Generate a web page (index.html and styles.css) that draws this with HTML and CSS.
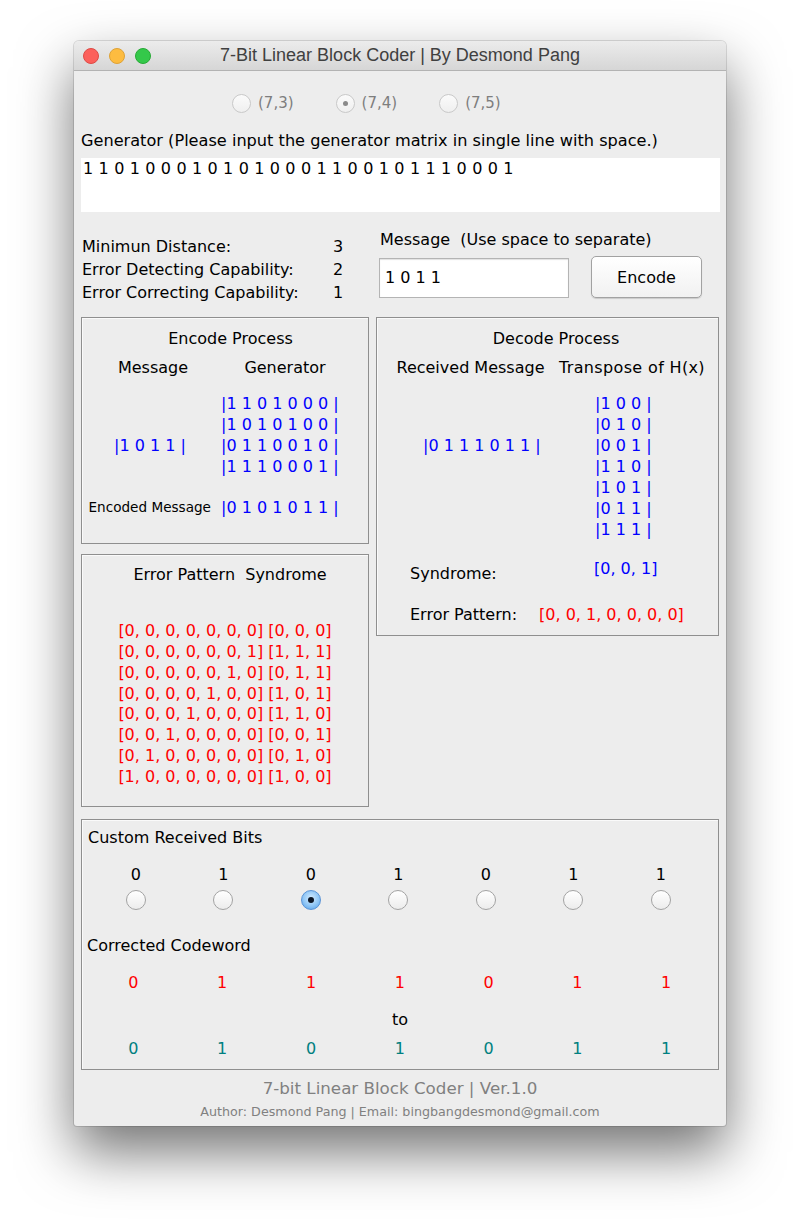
FILE: index.html
```html
<!DOCTYPE html>
<html>
<head>
<meta charset="utf-8">
<link rel="stylesheet" href="styles.css">
</head>
<body>
<div class="stage">
  <div class="window">
    <div class="titlebar">
      <div class="lights">
        <span class="light red"></span>
        <span class="light yellow"></span>
        <span class="light green"></span>
      </div>
      <div class="title">7-Bit Linear Block Coder | By Desmond Pang</div>
      <div></div>
    </div>
    <div class="content">
      <div class="models">
        <label class="model"><span class="radio dis"></span>(7,3)</label>
        <label class="model"><span class="radio dis on"></span>(7,4)</label>
        <label class="model"><span class="radio dis"></span>(7,5)</label>
      </div>
      <div class="gen-label">Generator (Please input the generator matrix in single line with space.)</div>
      <div class="gen-input">1 1 0 1 0 0 0 1 0 1 0 1 0 0 0 1 1 0 0 1 0 1 1 1 0 0 0 1</div>

      <div class="row-info">
        <div class="stats">
          <span>Minimun Distance:</span><span>3</span>
          <span>Error Detecting Capability:</span><span>2</span>
          <span>Error Correcting Capability:</span><span>1</span>
        </div>
        <div class="msg">
          <div class="msg-label">Message&nbsp; (Use space to separate)</div>
          <div class="msg-controls">
            <div class="msg-input">1 0 1 1</div>
            <div class="btn">Encode</div>
          </div>
        </div>
      </div>

      <div class="panels">
        <div class="left-col">
          <div class="panel encode">
            <div class="ptitle span2">Encode Process</div>
            <div class="hdr c1">Message</div>
            <div class="hdr c2">Generator</div>
            <div class="mx c2 first">|1 1 0 1 0 0 0 |</div>
            <div class="mx c2">|1 0 1 0 1 0 0 |</div>
            <div class="mx c1 blue">|1 0 1 1 |</div>
            <div class="mx c2">|0 1 1 0 0 1 0 |</div>
            <div class="mx c2">|1 1 1 0 0 0 1 |</div>
            <div class="enc-label c1">Encoded Message</div>
            <div class="mx c2 enc">|0 1 0 1 0 1 1 |</div>
          </div>
          <div class="panel errors">
            <div class="ptitle">Error Pattern&nbsp; Syndrome</div>
            <div class="elist">
              <div>[0, 0, 0, 0, 0, 0, 0] [0, 0, 0]</div>
              <div>[0, 0, 0, 0, 0, 0, 1] [1, 1, 1]</div>
              <div>[0, 0, 0, 0, 0, 1, 0] [0, 1, 1]</div>
              <div>[0, 0, 0, 0, 1, 0, 0] [1, 0, 1]</div>
              <div>[0, 0, 0, 1, 0, 0, 0] [1, 1, 0]</div>
              <div>[0, 0, 1, 0, 0, 0, 0] [0, 0, 1]</div>
              <div>[0, 1, 0, 0, 0, 0, 0] [0, 1, 0]</div>
              <div>[1, 0, 0, 0, 0, 0, 0] [1, 0, 0]</div>
            </div>
          </div>
        </div>
        <div class="panel decode">
          <div class="ptitle span2">Decode Process</div>
          <div class="hdr c1">Received Message</div>
          <div class="hdr c2">Transpose of H(x)</div>
          <div class="mx c2 hm first">|1 0 0 |</div>
          <div class="mx c2 hm">|0 1 0 |</div>
          <div class="mx c1 blue rmsg">|0 1 1 1 0 1 1 |</div>
          <div class="mx c2 hm">|0 0 1 |</div>
          <div class="mx c2 hm">|1 1 0 |</div>
          <div class="mx c2 hm">|1 0 1 |</div>
          <div class="mx c2 hm">|0 1 1 |</div>
          <div class="mx c2 hm">|1 1 1 |</div>
          <div class="syn-label c1">Syndrome:</div>
          <div class="syn-val c2">[0, 0, 1]</div>
          <div class="ep span2"><span class="ep-label">Error Pattern:</span><span class="ep-val">[0, 0, 1, 0, 0, 0, 0]</span></div>
        </div>
      </div>

      <div class="panel custom">
        <div class="ctitle">Custom Received Bits</div>
        <div class="bits">
          <span>0</span><span>1</span><span>0</span><span>1</span><span>0</span><span>1</span><span>1</span>
        </div>
        <div class="bits radios">
          <span class="radio"></span><span class="radio"></span><span class="radio sel"></span><span class="radio"></span><span class="radio"></span><span class="radio"></span><span class="radio"></span>
        </div>
        <div class="ctitle2">Corrected Codeword</div>
        <div class="digits red">
          <span>0</span><span>1</span><span>1</span><span>1</span><span>0</span><span>1</span><span>1</span>
        </div>
        <div class="to">to</div>
        <div class="digits teal">
          <span>0</span><span>1</span><span>0</span><span>1</span><span>0</span><span>1</span><span>1</span>
        </div>
      </div>

      <div class="foot1">7-bit Linear Block Coder | Ver.1.0</div>
      <div class="foot2">Author: Desmond Pang | Email: bingbangdesmond@gmail.com</div>
    </div>
  </div>
</div>
</body>
</html>
```

FILE: styles.css
```css
* { box-sizing: border-box; }
html, body { margin: 0; padding: 0; background: #ffffff; }
body {
  font-family: "DejaVu Sans", sans-serif;
  color: #000;
  width: 800px;
  height: 1231px;
  overflow: hidden;
}
.stage { padding: 41px 0 0 74px; }
.window {
  width: 652px;
  background: #ededed;
  border-radius: 5px 5px 3px 3px;
  box-shadow: 0 26px 55px rgba(0,0,0,0.55), 0 0 0 1px rgba(0,0,0,0.12);
  overflow: hidden;
}
.titlebar {
  height: 30px;
  display: grid;
  grid-template-columns: 1fr auto 1fr;
  align-items: center;
  background: linear-gradient(#ececec, #d6d6d6);
  border-bottom: 1px solid #b3b3b3;
}
.lights { display: flex; gap: 10px; padding-left: 9px; }
.light { width: 16px; height: 16px; border-radius: 50%; display: block; }
.light.red { background: #fc605b; border: 1px solid #de4a45; }
.light.yellow { background: #fdbc40; border: 1px solid #dea236; }
.light.green { background: #34c84a; border: 1px solid #27aa35; }
.title {
  font-family: "Liberation Sans", sans-serif;
  font-size: 18px;
  color: #404040;
}
.content { padding: 0 7px; }

.radio {
  display: inline-block;
  width: 20px; height: 20px;
  border-radius: 50%;
  border: 1px solid #a3a3a3;
  background: linear-gradient(#ffffff, #ececec);
  position: relative;
  flex: none;
}
.radio.dis { border-color: #c9c9c9; background: linear-gradient(#fbfbfb, #efefef); width: 19px; height: 19px; }
.radio.dis.on::after {
  content: ""; position: absolute; left: 6px; top: 6px; width: 5px; height: 5px;
  border-radius: 50%; background: #8a8a8a;
}
.radio.sel {
  border-color: #5b94d6;
  background: radial-gradient(circle at 50% 40%, #d4ecff 0%, #8fc6f6 55%, #4f9de8 100%);
}
.radio.sel::after {
  content: ""; position: absolute; left: 6px; top: 6px; width: 6px; height: 6px;
  border-radius: 50%; background: #0b1626;
}

.models {
  display: flex; justify-content: flex-start; gap: 42px;
  padding-top: 22px; height: 42px;
  padding-left: 151px;
}
.model {
  display: flex; align-items: center; gap: 7px;
  color: #7e7e7e; font-size: 15px; height: 20px;
}
.gen-label { margin-top: 18px; line-height: 20px; font-size: 16.15px; }
.gen-input {
  margin-top: 7px; height: 54px; background: #fff;
  padding: 1px 0 0 2px; line-height: 20px; font-size: 16px;
  letter-spacing: 0.15px;
  margin-right: -1px;
}

.row-info {
  display: grid; grid-template-columns: 288px 1fr; gap: 7px;
  margin-top: 18px;
}
.stats {
  display: grid; grid-template-columns: 251px auto; justify-content: start;
  padding: 5px 0 0 1px; line-height: 23px; font-size: 16px;
}
.msg { padding-left: 3px; }
.msg-label { line-height: 20px; font-size: 16px; padding-left: 1px; }
.msg-controls { display: flex; align-items: center; gap: 22px; margin-top: 7px; }
.msg-input {
  width: 190px; height: 40px; background: #fff;
  border: 1px solid #b4b4b4; box-shadow: inset 0 1px 1px rgba(0,0,0,0.12);
  padding-left: 5px; line-height: 38px; font-size: 16px;
}
.btn {
  width: 111px; height: 42px; margin-top: -1px;
  border: 1px solid #a2a2a2; border-radius: 5px;
  background: linear-gradient(#ffffff, #f1f1f1);
  box-shadow: 0 1px 1px rgba(0,0,0,0.15);
  display: flex; align-items: center; justify-content: center;
  font-size: 16px;
}

.panels {
  display: grid; grid-template-columns: 288px 1fr; gap: 7px;
  margin-top: 13px; align-items: start;
}
.left-col { display: flex; flex-direction: column; gap: 10px; }
.panel {
  border: 1px solid #8f8f8f;
  box-shadow: inset 1px 1px 0 #fafafa;
}
.encode {
  height: 227px;
  display: grid; grid-template-columns: 132px 1fr;
  grid-auto-rows: min-content;
  padding-top: 10px;
  font-size: 16px;
}
.decode {
  height: 319px;
  display: grid; grid-template-columns: 175px 1fr;
  grid-auto-rows: min-content;
  padding-top: 10px;
  font-size: 16px;
}
.span2 { grid-column: 1 / 3; }
.c1 { grid-column: 1; }
.c2 { grid-column: 2; }
.ptitle { text-align: center; line-height: 22px; }
.encode .ptitle { padding-left: 11px; }
.decode .ptitle { padding-left: 17px; }
.hdr { line-height: 22px; margin-top: 7px; text-align: center; }
.encode .hdr.c1 { padding-left: 10px; }
.encode .hdr.c2 { padding-right: 12px; }
.decode .hdr.c1 { padding-left: 12px; }
.decode .hdr.c2 { text-align: left; padding-left: 7px; white-space: nowrap; letter-spacing: 0.35px; }
.mx { color: #0000ff; line-height: 21px; white-space: pre; }
.mx.first { margin-top: 14px; }
.encode .mx.c2 { padding-left: 7px; }
.encode .mx.c1 { text-align: center; padding-left: 4px; }
.encode .mx.enc { margin-top: 20px; }
.enc-label { margin-top: 20px; line-height: 21px; font-size: 13.6px; text-align: right; padding-right: 3px; white-space: nowrap; }
.decode .mx.hm { padding-left: 43px; }
.decode .rmsg { padding-left: 46px; }
.syn-label { margin-top: 23px; line-height: 21px; padding-left: 33px; }
.syn-val { margin-top: 18px; line-height: 21px; padding-left: 42px; color: #0000ff; align-self: start; }
.ep { margin-top: 20px; line-height: 21px; padding-left: 33px; display: flex; gap: 22px; }
.ep-val { color: #ff0000; }

.errors { height: 253px; padding-top: 9px; font-size: 16px; }
.errors .ptitle { padding-left: 10px; }
.elist { margin-top: 35px; color: #ff0000; line-height: 20.85px; text-align: center; }
.elist div { white-space: nowrap; }

.custom {
  margin-top: 12px; height: 251px;
  padding-top: 7px; font-size: 16px;
}
.ctitle { line-height: 21px; padding-left: 6px; }
.bits {
  display: grid; grid-template-columns: repeat(7, 87.5px);
  margin-left: 10px; margin-top: 16px; line-height: 21px;
  justify-items: center;
}
.bits.radios { margin-top: 5px; line-height: 0; }
.ctitle2 { margin-top: 25px; line-height: 21px; padding-left: 5px; }
.digits {
  display: grid; grid-template-columns: repeat(7, 88.8px);
  margin-left: 7px; margin-top: 16px; line-height: 21px;
  justify-items: center;
}
.digits.red { color: #ff0000; }
.digits.teal { color: #008080; margin-top: 8px; }
.to { margin-top: 16px; line-height: 21px; text-align: center; }

.foot1 { margin-top: 8px; line-height: 20px; text-align: center; color: #808080; font-size: 16.7px; }
.foot2 { margin-top: 6px; line-height: 16px; text-align: center; color: #808080; font-size: 12.7px; padding-bottom: 6px; }
```
